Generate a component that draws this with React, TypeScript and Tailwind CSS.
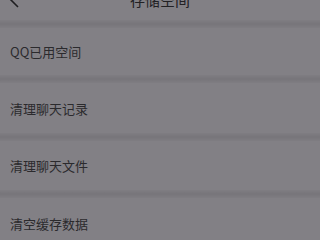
import React from "react";

const font = { fontFamily: '"Noto Sans CJK SC", "Noto Sans", sans-serif' };

function Sep() {
  return <div className="h-[8px] bg-gradient-to-b from-[#7f7d82] via-[#77757a] to-[#7f7d82]" />;
}

function Row({ label, h }: { label: string; h: string }) {
  return (
    <div className={`${h} flex items-center pl-[10px] bg-[#828085]`}>
      <span className="text-[13px] leading-none text-[#2b2a2d]">{label}</span>
    </div>
  );
}

export default function App() {
  return (
    <div className="w-[320px] h-[240px] overflow-hidden bg-[#828085]" style={font}>
      <div className="h-[20px] relative flex justify-center bg-[#828085]">
        <span className="text-[15px] leading-none text-[#222124] mt-[-8px]">存储空间</span>
        <svg className="absolute left-[8px] top-[-8px]" width="12" height="16" viewBox="0 0 12 16">
          <path d="M10 1 L3 8 L10 15" fill="none" stroke="#1f1e21" strokeWidth="1.6" />
        </svg>
      </div>
      <Sep />
      <Row label="QQ已用空间" h="h-[47px]" />
      <Sep />
      <Row label="清理聊天记录" h="h-[50px]" />
      <Sep />
      <Row label="清理聊天文件" h="h-[49px]" />
      <Sep />
      <Row label="清空缓存数据" h="h-[50px]" />
    </div>
  );
}
